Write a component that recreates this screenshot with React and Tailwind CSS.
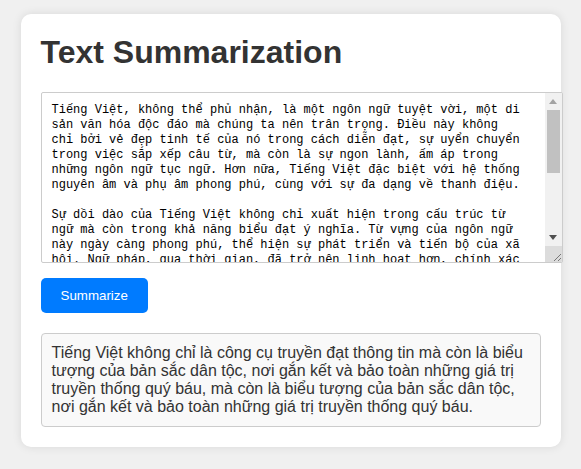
import { useState } from 'react'

const inputText = `Tiếng Việt, không thể phủ nhận, là một ngôn ngữ tuyệt vời, một di sản văn hóa độc đáo mà chúng ta nên trân trọng. Điều này không chỉ bởi vẻ đẹp tinh tế của nó trong cách diễn đạt, sự uyển chuyển trong việc sắp xếp câu từ, mà còn là sự ngon lành, ấm áp trong những ngôn ngữ tục ngữ. Hơn nữa, Tiếng Việt đặc biệt với hệ thống nguyên âm và phụ âm phong phú, cùng với sự đa dạng về thanh điệu.

Sự dồi dào của Tiếng Việt không chỉ xuất hiện trong cấu trúc từ ngữ mà còn trong khả năng biểu đạt ý nghĩa. Từ vựng của ngôn ngữ này ngày càng phong phú, thể hiện sự phát triển và tiến bộ của xã hội. Ngữ pháp, qua thời gian, đã trở nên linh hoạt hơn, chính xác hơn, giúp người nói truyền tải suy nghĩ một cách rõ ràng.

Tiếng Việt không chỉ là công cụ truyền đạt thông tin mà còn là biểu tượng của bản sắc dân tộc, nơi gắn kết và bảo toàn những giá trị truyền thống quý báu.`

const summary = 'Tiếng Việt không chỉ là công cụ truyền đạt thông tin mà còn là biểu tượng của bản sắc dân tộc, nơi gắn kết và bảo toàn những giá trị truyền thống quý báu, mà còn là biểu tượng của bản sắc dân tộc, nơi gắn kết và bảo toàn những giá trị truyền thống quý báu.'

function Scrollbar() {
  return (
    <div className="w-[17px] flex flex-col bg-[#f1f1f1]">
      <div className="h-[17px] flex items-center justify-center">
        <svg width="8" height="5" viewBox="0 0 8 5"><path d="M0 5 L4 0 L8 5 Z" fill="#a3a3a3" /></svg>
      </div>
      <div className="h-[63px] mx-[2px] bg-[#c1c1c1]" />
      <div className="flex-1" />
      <div className="h-[17px] flex items-center justify-center">
        <svg width="8" height="5" viewBox="0 0 8 5"><path d="M0 0 L4 5 L8 0 Z" fill="#505050" /></svg>
      </div>
      <div className="h-[16px] bg-[#dcdcdc] flex items-end justify-end">
        <svg width="12" height="12" viewBox="0 0 12 12">
          <path d="M11 4 L4 11 M11 8 L8 11" stroke="#777" strokeWidth="1" />
        </svg>
      </div>
    </div>
  )
}

export default function App() {
  const [text, setText] = useState(inputText)

  return (
    <div className="min-h-[469px] bg-[#f0f0f0] pt-[14px] font-['Liberation_Sans',Arial,sans-serif]">
      <div className="mx-auto w-[540px] bg-white rounded-[10px] shadow-[0_0_10px_rgba(0,0,0,0.1)] p-5">
        {/* Header */}
        <h1 className="text-[32px] leading-[37px] font-bold text-[#333] mb-[21px]">Text Summarization</h1>

        {/* Input */}
        <div className="w-[522px] h-[171px] flex border border-[#ccc] rounded-[2px] bg-white overflow-hidden">
          <textarea
            value={text}
            onChange={e => setText(e.target.value)}
            spellCheck={false}
            className="flex-1 min-w-0 h-full p-[10px] pr-[22px] font-['Liberation_Mono',monospace] text-[12px] leading-[15px] text-black overflow-y-auto resize-none outline-none [scrollbar-width:none]"
          />
          <Scrollbar />
        </div>

        <button className="mt-[15px] h-[35px] px-5 bg-[#007bff] hover:bg-[#0069d9] text-white text-[13.33px] rounded-[5px]">
          Summarize
        </button>

        {/* Result */}
        <div className="mt-5 bg-[#f9f9f9] border border-[#ccc] rounded-[4px] p-[10px] text-[16px] leading-[18px] text-[#333]">
          {summary}
        </div>
      </div>
    </div>
  )
}
